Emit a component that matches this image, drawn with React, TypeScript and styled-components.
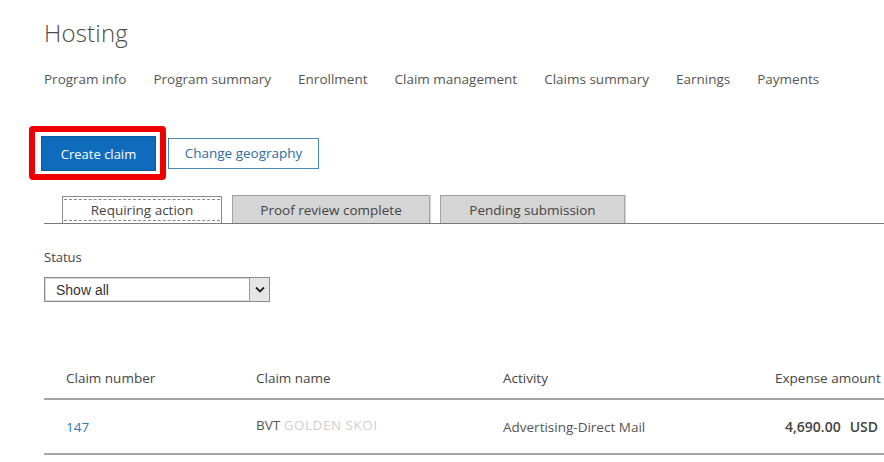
import React from "react";
import styled, { createGlobalStyle } from "styled-components";

const Global = createGlobalStyle`
  html, body { margin: 0; padding: 0; background: #fff; overflow: hidden; }
  body { font-family: "Open Sans", "Noto Sans", "Liberation Sans", sans-serif; color: #444; }
`;

const Page = styled.div`
  width: 920px;
  padding: 16px 0 0 44px;
  box-sizing: border-box;
`;

const Title = styled.h1`
  margin: 0;
  font-weight: 300;
  font-size: 24px;
  line-height: 34px;
  color: #4a4a4a;
  letter-spacing: 0.2px;
`;

const Nav = styled.nav`
  display: flex;
  gap: 27px;
  margin-top: 19px;
  height: 20px;
  align-items: center;
`;

const NavItem = styled.span`
  font-size: 13.5px;
  color: #555;
  white-space: nowrap;
`;

const Actions = styled.div`
  display: flex;
  align-items: center;
  margin: 37px 0 0 -15px;
`;

const Highlight = styled.div`
  border: 6px solid #ee0000;
  border-radius: 4px;
  padding: 4px 4px 3px 6px;
  display: flex;
`;

const PrimaryButton = styled.button`
  width: 115px;
  height: 35px;
  background: #0f6cbd;
  border: 1px solid #0a5aa0;
  color: #fff;
  font-family: inherit;
  font-size: 13px;
  padding: 0;
`;

const SecondaryButton = styled.button`
  margin-left: 2px;
  width: 151px;
  height: 31px;
  background: #fff;
  border: 1px solid #4d87ba;
  color: #2d6ca5;
  font-family: inherit;
  font-size: 13.5px;
  padding: 0;
`;

const TabStrip = styled.div`
  display: flex;
  align-items: flex-end;
  gap: 10px;
  margin-top: 14px;
  padding-left: 18px;
  border-bottom: 1px solid #7a7a7a;
  height: 29px;
`;

const Tab = styled.div<{ $active?: boolean }>`
  position: relative;
  box-sizing: border-box;
  width: ${(p) => (p.$active ? "160px" : "auto")};
  height: ${(p) => (p.$active ? "27px" : "28px")};
  display: flex;
  align-items: center;
  justify-content: center;
  font-size: 13.5px;
  color: #444;
  background: ${(p) => (p.$active ? "#fff" : "#d5d5d5")};
  border: 1px solid ${(p) => (p.$active ? "#8a8a8a" : "#a3a3a3")};
  border-bottom: none;
  box-shadow: ${(p) => (p.$active ? "none" : "1px 0 1px rgba(0,0,0,0.15)")};
  &::after {
    content: "";
    display: ${(p) => (p.$active ? "block" : "none")};
    position: absolute;
    left: 1px;
    right: 1px;
    top: 2px;
    bottom: 2px;
    border-top: 1px dashed #8a8a8a;
    border-bottom: 1px dashed #8a8a8a;
  }
`;

const FieldLabel = styled.div`
  margin-top: 24px;
  font-size: 13px;
  color: #444;
  line-height: 18px;
`;

const Select = styled.div`
  margin-top: 11px;
  width: 226px;
  height: 25px;
  box-sizing: border-box;
  border: 1px solid #8c8c8c;
  box-shadow: inset 0 0 0 1px #d8d8d8;
  display: flex;
  align-items: stretch;
`;

const SelectValue = styled.div`
  flex: 1;
  padding-left: 11px;
  display: flex;
  align-items: center;
  font-family: "Liberation Sans", Arial, sans-serif;
  font-size: 14px;
  color: #333;
`;

const SelectArrow = styled.div`
  width: 19px;
  background: #e6e6e6;
  border-left: 1px solid #9a9a9a;
  display: flex;
  align-items: center;
  justify-content: center;
`;

const Table = styled.div`
  margin-top: 56px;
  width: 860px;
`;

const Row = styled.div<{ $header?: boolean }>`
  display: grid;
  grid-template-columns: 22px 190px 247px 272px 1fr;
  align-items: center;
  height: ${(p) => (p.$header ? "40px" : "53px")};
  border-bottom: 2px solid #a5a5a5;
  font-size: 13.5px;
  color: ${(p) => (p.$header ? "#444" : "#555")};
`;

const Cell = styled.div<{ $col: number }>`
  grid-column: ${(p) => p.$col};
  white-space: nowrap;
  overflow: visible;
`;

const LinkCell = styled(Cell)`
  color: #2f7bbd;
`;

const NameCell = styled(Cell)`
  padding-bottom: 4px;
`;

const Blurred = styled.span`
  color: #d0d0d0;
  letter-spacing: 0.5px;
`;

const Amount = styled(Cell)`
  font-weight: 600;
  font-size: 14px;
  color: #444;
  padding-left: 10px;
  display: flex;
  gap: 9px;
`;

export default function App() {
  const nav = ["Program info", "Program summary", "Enrollment", "Claim management", "Claims summary", "Earnings", "Payments"];
  return (
    <>
      <Global />
      <Page>
        <Title>Hosting</Title>
        <Nav>
          {nav.map((n) => (
            <NavItem key={n}>{n}</NavItem>
          ))}
        </Nav>
        <Actions>
          <Highlight>
            <PrimaryButton>Create claim</PrimaryButton>
          </Highlight>
          <SecondaryButton>Change geography</SecondaryButton>
        </Actions>
        <TabStrip>
          <Tab $active>Requiring action</Tab>
          <Tab style={{ width: 198 }}>Proof review complete</Tab>
          <Tab style={{ width: 185 }}>Pending submission</Tab>
        </TabStrip>
        <FieldLabel>Status</FieldLabel>
        <Select>
          <SelectValue>Show all</SelectValue>
          <SelectArrow>
            <svg width="10" height="7" viewBox="0 0 10 7">
              <path d="M1 1.5 L5 5.5 L9 1.5" fill="none" stroke="#222" strokeWidth="1.8" />
            </svg>
          </SelectArrow>
        </Select>
        <Table>
          <Row $header>
            <Cell $col={2}>Claim number</Cell>
            <Cell $col={3}>Claim name</Cell>
            <Cell $col={4}>Activity</Cell>
            <Cell $col={5}>Expense amount</Cell>
          </Row>
          <Row>
            <LinkCell $col={2}>147</LinkCell>
            <NameCell $col={3}>
              BVT <Blurred>GOLDEN SKOI</Blurred>
            </NameCell>
            <Cell $col={4}>Advertising-Direct Mail</Cell>
            <Amount $col={5}>
              <span>4,690.00</span>
              <span>USD</span>
            </Amount>
          </Row>
        </Table>
      </Page>
    </>
  );
}
